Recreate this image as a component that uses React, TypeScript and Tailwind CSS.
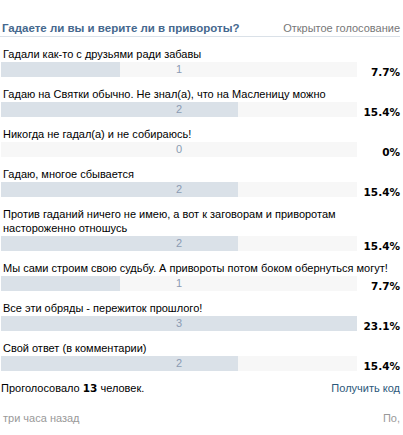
const options = [
  { text: "Гадали как-то с друзьями ради забавы", votes: 1, pct: "7.7%" },
  { text: "Гадаю на Святки обычно. Не знал(а), что на Масленицу можно", votes: 2, pct: "15.4%" },
  { text: "Никогда не гадал(а) и не собираюсь!", votes: 0, pct: "0%" },
  { text: "Гадаю, многое сбывается", votes: 2, pct: "15.4%" },
  {
    text: "Против гаданий ничего не имею, а вот к заговорам и приворотам настороженно отношусь",
    votes: 2,
    pct: "15.4%",
  },
  { text: "Мы сами строим свою судьбу. А привороты потом боком обернуться могут!", votes: 1, pct: "7.7%" },
  { text: "Все эти обряды - пережиток прошлого!", votes: 3, pct: "23.1%" },
  { text: "Свой ответ (в комментарии)", votes: 2, pct: "15.4%" },
];

const maxVotes = 3;

export default function App() {
  return (
    <div className="w-[403px] h-[435px] overflow-hidden bg-white pt-[21px] pr-[3px] font-['Liberation_Sans',Arial,sans-serif] text-[11px] text-black">
      <div className="flex items-center justify-between border-b border-[#dae1e8] pl-[2px] pb-[1px] leading-[14px]">
        <span className="text-[11.5px] font-bold text-[#45688e]">Гадаете ли вы и верите ли в привороты?</span>
        <span className="text-[#777]">Открытое голосование</span>
      </div>

      <div className="pt-[10px]">
        {options.map((o) => (
          <div key={o.text} className="mb-[10px]">
            <div className="pl-[3px] pr-[4px] leading-[14px]">{o.text}</div>
            <div className="mt-[1px] flex items-end">
              <div className="relative ml-[1px] h-[15px] w-[356px] bg-[#f7f7f7]">
                <div
                  className="h-full bg-[#dae1e8]"
                  style={{ width: `${(o.votes / maxVotes) * 100}%` }}
                />
                <span className="absolute inset-0 text-center leading-[15px] text-[#8a9bb3]">
                  {o.votes}
                </span>
              </div>
              <span className="flex-1 text-right font-['DejaVu_Sans',sans-serif] text-[10.5px] font-bold leading-[9px]">
                {o.pct}
              </span>
            </div>
          </div>
        ))}
      </div>

      <div className="mt-[3px] flex justify-between pl-[1px] leading-[14px]">
        <span>
          Проголосовало <b className="font-['DejaVu_Sans',sans-serif] text-[10.5px]">13</b> человек.
        </span>
        <a className="text-[#2b587a]">Получить код</a>
      </div>

      <div className="mt-[16px] flex justify-between pl-[3px] leading-[14px] text-[#999]">
        <span>три часа назад</span>
        <span>По,</span>
      </div>
    </div>
  );
}
